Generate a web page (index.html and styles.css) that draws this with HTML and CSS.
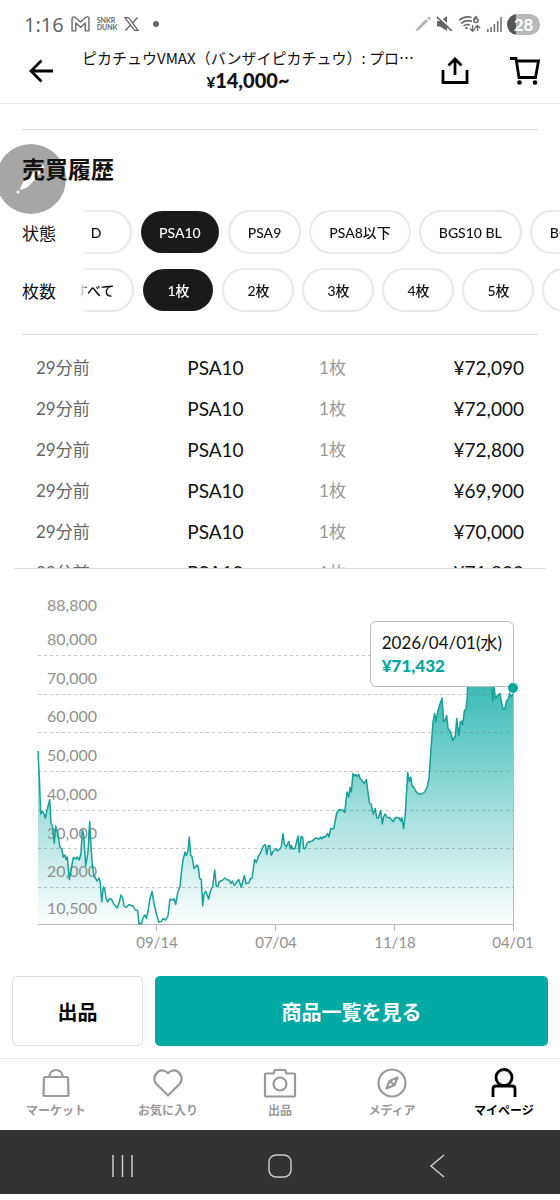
FILE: index.html
```html
<!DOCTYPE html>
<html lang="ja">
<head>
    <meta charset="UTF-8">
    <meta name="viewport" content="width=device-width, initial-scale=1.0">
    <title>売買履歴 - SNKRDUNK</title>
    <link rel="stylesheet" href="styles.css">
</head>
<body>
    <div class="status-bar">
        <div class="status-group">
            <span class="clock">1:16</span>
            <svg width="19" height="16" viewBox="0 0 18 15" fill="#fff" stroke="#666" stroke-width="1.3" stroke-linejoin="round"><path d="M1 2.500C1 .5 3 .3 4.500 1.500L9 5.500l4.500-4C15 .3 17 .5 17 2.500V14h-3.500V6.500L9 10.500l-4.500-4V14H1z"/></svg>
            <span class="brand">SNKR<br>DUNK</span>
            <svg width="15" height="14" viewBox="0 0 15 14" fill="none" stroke="#666" stroke-width="1.3"><path d="M1 .7h3.500l9.500 12.600h-3.500zM13.500.5 8.500 6M6.300 8.200 1.500 13.500"/></svg>
            <span class="dot"></span>
        </div>
        <div class="status-group status-right">
            <svg width="16" height="16" viewBox="0 0 16 16" fill="#b5b5b5"><path d="M.5 15.500 2 12 11 3l2 2-9 9zM12 2l1-1q1-1 2 0t.2 2l-1 1z"/></svg>
            <svg width="17" height="16" viewBox="0 0 17 16"><path d="M1 5h3l7-5v15l-7-4.500H1z" fill="#666"/><path d="M1.500-.5 16.500 13.500" stroke="#fff" stroke-width="2"/><path d="M.8.8 15.800 14.800" stroke="#666" stroke-width="1.6"/></svg>
            <svg width="24" height="18" viewBox="0 0 24 18" fill="none" stroke="#666" stroke-width="1.6"><path d="M1 5.500Q7 .5 13.500 2.500M3 8.500Q8 4 14 6.500M5.500 11Q8.500 8.500 12 10"/><circle cx="8.500" cy="13" r="1.2" fill="#666" stroke="none"/><path d="M19 1.500q-3 1-3 4"/><circle cx="18" cy="5.500" r="2"/><path d="M14.500 10v6M12 13.500l2.500 2.500 2.500-2.500M19.500 16v-5M17 13l2.500-2.500L22 13" stroke-width="1.3"/></svg>
            <svg width="15" height="15" viewBox="0 0 15 15" fill="#777"><path d="M0 12h1.600v3H0zM3.300 10h1.600v5H3.300zM6.600 7h1.600v8H6.600zM9.900 4h1.600v11H9.900zM13.200 0h1.600v15h-1.600z"/></svg>
            <span class="battery">28</span>
        </div>
    </div>

    <header class="header">
        <button type="button" class="icon-button" aria-label="戻る">
            <svg width="24" height="24" viewBox="0 0 24 24" fill="none" stroke="#000" stroke-width="2.8"><path d="M24 12H2M12.500 1.500 2 12l10.500 10.500"/></svg>
        </button>
        <div class="product">
            <div class="product-name">ピカチュウVMAX（バンザイピカチュウ）: プロ…</div>
            <div class="product-price"><small>¥</small>14,000~</div>
        </div>
        <button type="button" class="icon-button" aria-label="共有">
            <svg width="28" height="28" viewBox="0 0 28 28" fill="none" stroke="#000" stroke-width="2.8"><path d="M2 13v12.500h24V13M14 18V2.500M7.500 8.500 14 2l6.500 6.500"/></svg>
        </button>
        <button type="button" class="icon-button cart" aria-label="カート">
            <svg width="30" height="28" viewBox="0 0 30 28" fill="none" stroke="#000" stroke-width="2.8"><path d="M0 1.500h6l3 19h16.500l3-16.500H6.500"/><g fill="#000" stroke="none"><circle cx="9.500" cy="25.500" r="2.300"/><circle cx="25" cy="25.500" r="2.300"/></g></svg>
        </button>
    </header>

    <main>
        <section class="history">
            <div class="pen-bubble">
                <svg width="30" height="30" viewBox="0 0 30 30" fill="#fff"><path d="M4 26q1-6 6-11L22 4l3.500 3.500L15 20q-5 5-11 6z"/><path d="m23 3 1.500-2q2-.5 3 1t.5 3l-1.500 1.500z"/><circle cx="2" cy="28" r="1.5"/></svg>
            </div>
            <h1>売買履歴</h1>
            <div class="filter">
                <span class="filter-label">状態</span>
                <div class="chips" data-scroll="20">
                    <button type="button" class="chip">D</button>
                    <button type="button" class="chip selected">PSA10</button>
                    <button type="button" class="chip">PSA9</button>
                    <button type="button" class="chip">PSA8以下</button>
                    <button type="button" class="chip">BGS10 BL</button>
                    <button type="button" class="chip">BGS10 GL</button>
                </div>
            </div>
            <div class="filter">
                <span class="filter-label">枚数</span>
                <div class="chips" data-scroll="26">
                    <button type="button" class="chip">すべて</button>
                    <button type="button" class="chip selected">1枚</button>
                    <button type="button" class="chip">2枚</button>
                    <button type="button" class="chip">3枚</button>
                    <button type="button" class="chip">4枚</button>
                    <button type="button" class="chip">5枚</button>
                    <button type="button" class="chip">6枚</button>
                </div>
            </div>
        </section>

        <div class="trades">
            <table>
                <tbody>
                    <tr><td class="time">29分前</td><td class="grade">PSA10</td><td class="count">1枚</td><td class="price">¥72,090</td></tr>
                    <tr><td class="time">29分前</td><td class="grade">PSA10</td><td class="count">1枚</td><td class="price">¥72,000</td></tr>
                    <tr><td class="time">29分前</td><td class="grade">PSA10</td><td class="count">1枚</td><td class="price">¥72,800</td></tr>
                    <tr><td class="time">29分前</td><td class="grade">PSA10</td><td class="count">1枚</td><td class="price">¥69,900</td></tr>
                    <tr><td class="time">29分前</td><td class="grade">PSA10</td><td class="count">1枚</td><td class="price">¥70,000</td></tr>
                    <tr><td class="time">29分前</td><td class="grade">PSA10</td><td class="count">1枚</td><td class="price">¥71,800</td></tr>
                </tbody>
            </table>
        </div>

        <div class="chart">
            <svg viewBox="0 0 560 370">
                <defs>
                    <linearGradient id="fade" gradientUnits="userSpaceOnUse" x1="0" y1="60" x2="0" y2="334">
                        <stop offset="0" stop-color="#00a8a0" stop-opacity="0.88"/>
                        <stop offset="1" stop-color="#00a8a0" stop-opacity="0.01"/>
                    </linearGradient>
                </defs>
                <path id="area" class="area"/>
                <path class="grid" d="M38 65.500H513M38 104.500H513M38 142.500H513M38 181.500H513M38 220.500H513M38 258.500H513M38 297.500H513"/>
                <path class="axis" d="M38 334.500H513.500M156.500 334v7M275.500 334v7M394.500 334v7M513.500 98V341"/>
                <g class="axis-text">
                    <text x="47" y="21">88,800</text>
                    <text x="47" y="55">80,000</text>
                    <text x="47" y="94">70,000</text>
                    <text x="47" y="132">60,000</text>
                    <text x="47" y="171">50,000</text>
                    <text x="47" y="210">40,000</text>
                    <text x="47" y="249">30,000</text>
                    <text x="47" y="287">20,000</text>
                    <text x="47" y="324">10,500</text>
                </g>
                <g class="axis-text dates">
                    <text x="157" y="358">09/14</text>
                    <text x="276" y="358">07/04</text>
                    <text x="395" y="358">11/18</text>
                    <text x="513" y="358">04/01</text>
                </g>
                <path id="line" class="line" d="M38 161L39.300 187 40.700 224 42.300 221 44 224 45.300 228 47 220 49.700 209.500 51 233 52.500 236 54.300 253.500 55.700 236 57.700 243 60 257 61.700 259 63.300 267 65 265 66 269.500 67.300 267 69.300 289.500 71 280 73.300 267.500 76 269 77.300 267 79.300 270 81 263 82.300 240 83.700 245 85.700 276 88 262 89.700 231.500 91 257 92.300 275 94 286 97.300 291 99 288 100.300 293 101.700 312 103.300 297 104.700 299 106 308 107.700 312 109.300 308.500 111.700 309.500 114.300 315 117.300 318 119 313 121 305 122.700 308 124 316 126 317.500 129 314.500 133.300 316.500 135.300 320 137.700 320.500 139 334 141.700 333 143 328 144.700 325 146.300 328.500 148 321.500 149.700 310 152 301.500 154.300 315 156.700 325 158.700 332 161.300 331.500 163 328.500 165.700 330 168 326 170 309 172.700 310 174.300 309 175.700 314.500 177.700 302.500 180 296.500 181.300 283 183 270 185 262 186.300 265.500 188 261 189.300 247 190.700 265.500 192 266.500 194 278.500 197 275 198.300 277 199.700 288.500 201.300 289.500 202.700 316 204 304 205.700 301 208.700 309 210.300 301.500 212.700 296 214.700 280 216.300 296.500 218 296.500 219.300 291.500 222 290.500 225 288 227.300 290 229.300 290 231 293.500 232.300 291 234.300 295.500 238.700 289.500 241.300 297.500 244.300 285.500 246 293.500 248.700 293 250.300 289 252 288 254.700 269.500 256.300 272.500 258.300 266.500 260.700 262.500 263.300 256 265.300 254.500 266.700 264.500 268.300 255.500 269.700 255.500 271.300 265.500 273.300 261 276.300 258.500 277.300 261 280 259 281.300 256.500 283 243.500 284.300 254 286.300 257 288.700 251.500 290.300 259 291.300 255.500 292.700 259 295 258.500 298 246 299.300 262.500 301 246.500 302.700 247.500 303.700 258.500 305.300 258.500 307.300 252.500 312.300 251 315.300 248 319.300 249 320.700 247 322 249 323.300 246.500 324.700 247.500 327.700 243.500 329 247 330.700 238.500 333.700 239 336.700 223 339.300 219.500 343.300 220.500 344.700 222.500 347 202 348.700 207 350 197.500 351.300 202 353 183.500 354.300 186 355.700 184.500 357.300 186.500 358.700 184.500 360 188.500 364.300 193.500 366.300 189.500 367.700 200 369.300 212.500 371 214 373.300 224 375.300 218.500 376.700 228 378.300 228 380.700 220.500 382.300 234 383.700 226.500 385.300 224 387 227.500 389.700 227.500 393 231.500 395.700 227.500 399.300 228 400.700 231 401.700 227.500 403.700 238.500 405.300 223.500 407.700 182.500 409.300 191.500 410.700 187 412.300 196.500 413.700 197 416 201.500 418.300 204 421.700 204 424.700 202 427 197.500 429 188.500 430.700 163 433 132 434.700 123.500 436 131.500 437.700 121.500 439.700 115 442 108 443.700 131.500 445 130.500 446.700 125.500 448 138.500 450.700 142 452.700 150.500 455.300 146 456.700 128.500 458.700 146 460.300 132 461.700 131 462.700 135 464.300 121 466 119 467.300 106.500 468.300 78 491 78 492.700 111 494 96 495.300 108.500 498 105 500 103.500 501.700 113.500 503.300 119.500 504.700 119 506.700 110.500 508.300 109 509.700 103.500 511 106.500 513 104"/>
            </svg>
            <div class="tooltip">
                <div>2026/04/01(水)</div>
                <strong>¥71,432</strong>
            </div>
            <span class="marker"></span>
        </div>

        <div class="actions">
            <button type="button" class="button button-sell">出品</button>
            <button type="button" class="button button-list">商品一覧を見る</button>
        </div>
    </main>

    <nav class="tabs">
        <a href="#market" class="tab">
            <svg width="30" height="30" viewBox="0 0 30 30"><path d="M4 9h22q1 0 1 1l.5 17q0 1-1 1h-23q-1 0-1-1L3 10q0-1 1-1zM8 9q1-7 7-7t7 7"/></svg>
            マーケット
        </a>
        <a href="#likes" class="tab">
            <svg width="30" height="30" viewBox="0 0 30 30"><path d="M15 27.500 3.500 16Q-.5 11 3 6t9-3q2 .7 3 2.500 1-1.800 3-2.500 5.500-2 9 3t-.5 10z"/></svg>
            お気に入り
        </a>
        <a href="#sell" class="tab">
            <svg width="34" height="30" viewBox="0 0 34 30"><path d="M3 5.500h7.500L12 2h10l1.500 3.500H31q1 0 1 1v21q0 1-1 1H3q-1 0-1-1v-21q0-1 1-1z"/><circle cx="17" cy="16" r="6.500"/></svg>
            出品
        </a>
        <a href="#media" class="tab">
            <svg width="30" height="30" viewBox="0 0 30 30"><circle cx="15" cy="15" r="13.500"/><path d="M20.500 9.500 17.500 17l-8 3.500 3-7.500zM13 13l4 4"/></svg>
            メディア
        </a>
        <a href="#mypage" class="tab active">
            <svg width="30" height="30" viewBox="0 0 30 30"><circle cx="15" cy="9.500" r="8"/><path d="M4 29v-8q0-3 3-3h16q3 0 3 3v8"/></svg>
            マイページ
        </a>
    </nav>

    <div class="system-nav">
        <button type="button" aria-label="アプリ履歴">
            <svg width="24" height="24" viewBox="0 0 24 24"><path d="M2 1v22M11.500 1v22M21 1v22"/></svg>
        </button>
        <button type="button" aria-label="ホーム">
            <svg width="24" height="24" viewBox="0 0 24 24"><rect x="1" y="1" width="22" height="22" rx="7"/></svg>
        </button>
        <button type="button" aria-label="戻る">
            <svg width="24" height="24" viewBox="0 0 24 24"><path d="M19 1 6 12l13 11"/></svg>
        </button>
    </div>

    <script>
        // El área es la misma línea cerrada sobre el eje
        const line = document.getElementById('line');
        const area = document.getElementById('area');
        area.setAttribute('d', line.getAttribute('d') + 'V334H38z');

        document.querySelectorAll('.chips').forEach((chips) => {
            chips.scrollLeft = Number(chips.dataset.scroll);

            chips.addEventListener('click', (event) => {
                if (event.target.classList.contains('chip')) {
                    chips.querySelector('.selected').classList.remove('selected');
                    event.target.classList.add('selected');
                }
            });
        });
    </script>
</body>
</html>
```

FILE: styles.css
```css
* {
    box-sizing: border-box;
}

body {
    margin: 0;
    background-color: #fff;
    color: #111;
    font-family: Lato, 'Noto Sans CJK JP', sans-serif;
    overflow-x: hidden;
}

button {
    font-family: inherit;
    cursor: pointer;
}

svg {
    display: block;
    flex-shrink: 0;
}

/* Barra de estado */
.status-bar {
    display: flex;
    justify-content: space-between;
    align-items: center;
    height: 48px;
    padding: 0 20px 0 24px;
    color: #666;
}

.status-group {
    display: flex;
    align-items: center;
    gap: 7px;
}

.status-right {
    gap: 5px;
}

.clock {
    font-family: 'Noto Sans', sans-serif;
    font-size: 20px;
}

.brand {
    font-size: 7px;
    line-height: 7px;
    font-weight: bold;
}

.dot {
    width: 6px;
    height: 6px;
    margin-left: 7px;
    border-radius: 50%;
    background-color: #666;
}

.battery {
    width: 33px;
    height: 21px;
    border-radius: 11px;
    background: linear-gradient(to right, #555 28%, #b8b8b8 28%);
    color: #fff;
    font-size: 17px;
    line-height: 21px;
    font-weight: bold;
    text-align: center;
}

/* Header */
.header {
    display: flex;
    align-items: center;
    height: 56px;
    padding: 0 18px 10px 24px;
    border-bottom: 1px solid #e8e8e8;
}

.icon-button {
    display: flex;
    justify-content: center;
    align-items: center;
    width: 34px;
    height: 40px;
    padding: 0;
    border: none;
    background: none;
}

.product {
    flex: 1;
    min-width: 0;
    padding: 0 22px;
    text-align: center;
}

.product-name {
    font-family: 'Noto Sans CJK JP', sans-serif;
    font-size: 15px;
    line-height: 20px;
    white-space: nowrap;
}

.product-price {
    font-size: 20px;
    line-height: 24px;
    font-weight: 900;
}

.product-price small {
    font-size: 15px;
}

.cart {
    margin-left: 36px;
}

/* History */
.history {
    position: relative;
    margin: 25px 0 0 22px;
    padding-bottom: 23px;
}

.history::before {
    content: "";
    display: block;
    height: 1px;
    margin-right: 22px;
    background-color: #ddd;
}

.history::after {
    content: "";
    position: absolute;
    bottom: 0;
    left: 0;
    right: 22px;
    height: 1px;
    background-color: #ddd;
}

.pen-bubble {
    position: absolute;
    top: 15px;
    left: -26px;
    display: flex;
    justify-content: center;
    align-items: center;
    width: 70px;
    height: 70px;
    border-radius: 50%;
    background-color: #a6a6a6;
}

h1 {
    position: relative;
    margin: 23px 0 25px;
    font-size: 23px;
    line-height: 32px;
    font-weight: bold;
}

.filter {
    display: flex;
    align-items: center;
    margin-bottom: 14px;
}

.filter:last-child {
    margin-bottom: 0;
}

.filter-label {
    width: 58px;
    flex-shrink: 0;
    font-size: 17px;
}

.chips {
    display: flex;
    flex: 1;
    gap: 8px;
    min-width: 0;
    overflow-x: auto;
    scrollbar-width: none;
    -webkit-mask-image: linear-gradient(to right, transparent, #000 10px);
    mask-image: linear-gradient(to right, transparent, #000 10px);
}

.chip {
    flex-shrink: 0;
    min-width: 72px;
    height: 44px;
    padding: 0 18px;
    border: 2px solid #e8e8e8;
    border-radius: 22px;
    background-color: #fff;
    color: #111;
    font-size: 14px;
    font-weight: 500;
}

.chip.selected {
    min-width: 70px;
    height: 42px;
    margin: 1px;
    border: none;
    background-color: #1a1a1a;
    color: #fff;
}

/* Trades */
.trades {
    max-height: 234px;
    margin: 0 14px;
    padding: 12px 22px 0;
    border-bottom: 1px solid #ddd;
    overflow: hidden;
}

table {
    width: 100%;
    border-collapse: collapse;
    table-layout: fixed;
}

td {
    height: 41px;
    padding: 0;
    font-size: 17px;
    line-height: 24px;
}

.time {
    width: 31%;
    color: #666;
}

.grade {
    width: 27%;
    font-size: 19px;
}

.count {
    width: 16%;
    color: #999;
}

.price {
    width: 26%;
    text-align: right;
    font-size: 19px;
}

/* Chart */
.chart {
    position: relative;
    margin-top: 21px;
}

.area {
    fill: url(#fade);
}

.line {
    fill: none;
    stroke: #15a099;
    stroke-width: 1.5;
    stroke-linejoin: round;
}

.grid {
    fill: none;
    stroke: rgba(110, 110, 110, 0.4);
    stroke-dasharray: 3 3;
}

.axis {
    fill: none;
    stroke: #bbb;
}

.axis-text {
    fill: #919191;
    font-size: 16px;
}

.dates {
    font-size: 15px;
    text-anchor: middle;
}

.tooltip {
    position: absolute;
    top: 31px;
    right: 46px;
    padding: 9px 11px;
    border: 1px solid #bbb;
    border-radius: 6px;
    background-color: #fff;
    color: #111;
    font-size: 17px;
    line-height: 23px;
}

.tooltip strong {
    display: block;
    color: #00a59e;
    font-size: 17px;
    font-weight: 900;
}

.marker {
    position: absolute;
    top: 93px;
    right: 42px;
    width: 10px;
    height: 10px;
    border-radius: 50%;
    background-color: #00a59e;
}

/* Buttons */
.actions {
    display: grid;
    grid-template-columns: 1fr 3fr;
    gap: 12px;
    padding: 16px 12px 12px;
}

.button {
    height: 70px;
    border: none;
    border-radius: 5px;
    font-size: 20px;
    font-weight: bold;
}

.button-sell {
    border: 1px solid #ddd;
    background-color: #fff;
    color: #000;
}

.button-list {
    background-color: #00a9a4;
    color: #fff;
}

/* Tabs */
.tabs {
    display: flex;
    height: 72px;
    padding-top: 9px;
    border-top: 1px solid #e6e6e6;
}

.tab {
    display: flex;
    flex: 1;
    flex-direction: column;
    align-items: center;
    gap: 4px;
    color: #999;
    font-size: 12px;
    line-height: 18px;
    font-weight: bold;
    text-decoration: none;
}

.tab svg {
    fill: none;
    stroke: currentColor;
    stroke-width: 2.2;
    stroke-linejoin: round;
}

.tab.active {
    color: #000;
}

.tab.active svg {
    stroke-width: 2.8;
}

.system-nav {
    display: flex;
    justify-content: center;
    gap: 133px;
    height: 64px;
    background-color: #333;
}

.system-nav button {
    display: flex;
    align-items: center;
    padding: 8px 0 0;
    border: none;
    background: none;
}

.system-nav svg {
    fill: none;
    stroke: #ccc;
    stroke-width: 1.5;
}
```
